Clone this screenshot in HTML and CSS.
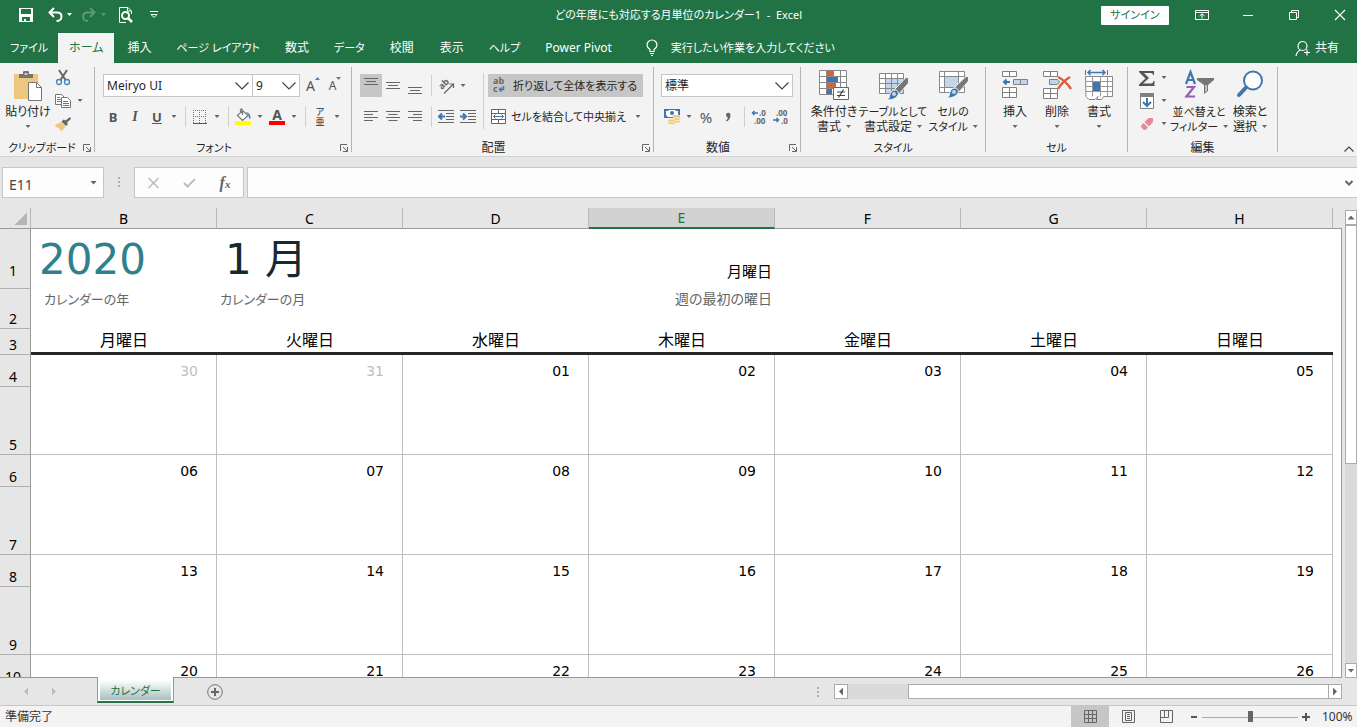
FILE: index.html
```html
<!DOCTYPE html>
<html lang="ja">
<head>
<meta charset="utf-8">
<title>どの年度にも対応する月単位のカレンダー1 - Excel</title>
<link rel="stylesheet" href="styles.css">
</head>
<body>
<header class="titlebar">
  <div class="quick">
    <button aria-label="上書き保存"><svg width="16" height="16" viewBox="0 0 16 16"><path fill="#fff" fill-rule="evenodd" d="M1 1h14v14H1zM3 2v5h10V2zM4 10v4h2v-2h2v2h4v-4z"/></svg></button>
    <button class="undo" aria-label="元に戻す"><svg width="26" height="16" viewBox="0 0 26 16"><path fill="none" stroke="#fff" stroke-width="2" d="M7 1L2.500 5.500L7 10M3 5.500h7c3 0 4.500 1.500 4.500 4s-2 4.500-5 4.500"/><path fill="#fff" d="M20 6h5l-2.500 3z"/></svg></button>
    <button class="redo" aria-label="やり直し"><svg width="26" height="16" viewBox="0 0 26 16"><path fill="none" stroke="#5c9a76" stroke-width="2" d="M9 1l4.500 4.500L9 10M13 5.500H7C4 5.500 2 7 2 9.500S4 14 7 14"/><path fill="#5c9a76" d="M20 6h5l-2.500 3z"/></svg></button>
    <button class="preview" aria-label="印刷プレビュー"><svg width="16" height="18" viewBox="0 0 16 18"><path fill="none" stroke="#fff" d="M13.500 8V5L10 1.500H1.500v15H8M9.500 1.500V5H13"/><circle cx="7.500" cy="9.500" r="3.500" fill="none" stroke="#fff" stroke-width="2"/><path stroke="#fff" stroke-width="2.500" d="M10 12l4 4"/></svg></button>
    <button class="custom" aria-label="クイック アクセス ツール バーのカスタマイズ"><svg width="8" height="8" viewBox="0 0 8 8"><path fill="none" stroke="#fff" d="M0 .5h8M1 3.500h6L4 6.500z"/></svg></button>
  </div>
  <h1 class="title kana">どの年度にも対応する月単位のカレンダー1&nbsp; -&nbsp; Excel</h1>
  <div class="window">
    <button class="signin kana">サインイン</button>
    <button aria-label="リボンの表示オプション"><svg width="14" height="12" viewBox="0 0 14 12"><path fill="none" stroke="#fff" d="M.5 1.500h13v9H.5zM.5 3.500h13M7 9.500V5M4.500 7L7 4.800L9.500 7"/></svg></button>
    <button aria-label="最小化"><svg width="10" height="10" viewBox="0 0 10 10"><path stroke="#fff" d="M0 5.500h10"/></svg></button>
    <button aria-label="元に戻す (縮小)"><svg width="10" height="10" viewBox="0 0 10 10"><path fill="none" stroke="#fff" d="M.5 2.500h7v7h-7zM2.500 2.500v-2h7v7h-2"/></svg></button>
    <button aria-label="閉じる"><svg width="10" height="10" viewBox="0 0 10 10"><path stroke="#fff" stroke-width="1.200" d="M0 0l10 10M10 0L0 10"/></svg></button>
  </div>
</header>
<nav class="tabs">
  <button class="kana file">ファイル</button><button class="on">ホーム</button><button>挿入</button><button class="kana">ページ レイアウト</button><button>数式</button><button class="kana">データ</button><button>校閲</button><button>表示</button><button class="kana">ヘルプ</button><button>Power Pivot</button>
  <button class="tell kana"><svg width="14" height="18" viewBox="0 0 14 18"><path fill="none" stroke="#fff" stroke-width="1.200" d="M5 12.500v-2C3 9 2 8 2 6a5 5 0 0 1 10 0c0 2-1 3-3 4.500v2zM5 14.500h4M6 16.500h2"/></svg>実行したい作業を入力してください</button>
  <button class="share"><svg width="16" height="17" viewBox="0 0 16 17"><circle cx="7.500" cy="6" r="4.500" fill="none" stroke="#fff" stroke-width="1.200"/><path fill="none" stroke="#fff" stroke-width="1.200" d="M1 16c.5-3 2-5 4.500-6M9 12.500h6M12 9.500v6"/></svg>共有</button>
</nav>
<section class="ribbon">
  <div class="group clip">
    <div class="body">
      <button class="big"><svg width="30" height="31" viewBox="0 0 30 31"><path fill="#ecc77e" d="M1 4h24v25H1z"/><path fill="#757575" d="M6 8V4h4V2c0-1 1-1 1-1h4s1 0 1 1v2h4v4z"/><path fill="#ecc77e" d="M11.500 3h3v2h-3z"/><path fill="#fff" stroke="#757575" d="M15.500 12.500h8l5 5v13h-13z"/><path fill="none" stroke="#757575" d="M23.500 12.500v5h5"/></svg><span>貼り付け</span><i class="caret"></i></button>
      <div class="trio">
        <div><button class="sq" aria-label="切り取り"><svg width="16" height="16" viewBox="0 0 16 16"><path stroke="#666" stroke-width="2" d="M4 0l6.500 10M12 0L5.500 10"/><circle cx="4" cy="12" r="2.500" fill="none" stroke="#4a80b5" stroke-width="1.300"/><circle cx="12" cy="12" r="2.500" fill="none" stroke="#4a80b5" stroke-width="1.300"/></svg></button></div>
        <div><button class="sq" aria-label="コピー"><svg width="16" height="16" viewBox="0 0 16 16"><path fill="#fff" stroke="#757575" d="M.5 1.500h6l3 3v7h-9z"/><path stroke="#4a80b5" d="M2 4.500h3M2 6.500h4M2 8.500h4"/><path fill="#fff" stroke="#757575" d="M6.500 4.500h6l3 3v7h-9z"/><path stroke="#4a80b5" d="M8 8.500h5M8 10.500h6M8 12.500h6"/></svg></button><button class="car" aria-label="コピーのオプション"><i class="caret"></i></button></div>
        <div><button class="sq" aria-label="書式のコピー/貼り付け"><svg width="16" height="16" viewBox="0 0 16 16"><path fill="#666" d="M15 1l1 2-4 3.500 1 1.500-2 2-4.500-4.500 2-2 2 1z"/><path fill="#ecc77e" d="M6 6l4.500 4.500L7 15l-2-1-1-2-3-1-1-2z"/></svg></button></div>
      </div>
    </div>
    <div class="foot kana"><span>クリップボード</span><button class="launch" aria-label="クリップボードのオプション"><svg width="8" height="8" viewBox="0 0 8 8"><path fill="none" stroke="#666" d="M.5 7V.5H7M3 3l4 4M7.500 3v4.500H3"/></svg></button></div>
  </div>
  <div class="group font">
    <div class="body stack">
      <div class="line">
        <div class="combo name"><select aria-label="フォント"><option>Meiryo UI</option></select><svg width="14" height="8" viewBox="0 0 14 8"><path fill="none" stroke="#444" stroke-width="1.200" d="M.5.5L7 7L13.500.5"/></svg></div>
        <div class="combo size"><select aria-label="フォント サイズ"><option>9</option></select><svg width="14" height="8" viewBox="0 0 14 8"><path fill="none" stroke="#444" stroke-width="1.200" d="M.5.5L7 7L13.500.5"/></svg></div>
        <button class="sq glyph grow" aria-label="フォント サイズの拡大">A<svg width="5" height="12" viewBox="0 0 5 12"><path fill="#4a80b5" d="M0 3h5L2.500 0z"/></svg></button>
        <button class="sq glyph small" aria-label="フォント サイズの縮小">A<svg width="5" height="12" viewBox="0 0 5 12"><path fill="#4a80b5" d="M0 0h5L2.500 3z"/></svg></button>
      </div>
      <div class="line">
        <button class="sq glyph">B</button><button class="sq glyph it">I</button><button class="sq glyph un">U</button><button class="car" aria-label="下線のオプション"><i class="caret"></i></button><i class="sep"></i>
        <button class="sq" aria-label="罫線"><svg width="14" height="14" viewBox="0 0 14 14"><path fill="none" stroke="#777" stroke-dasharray="1 1" d="M.5 0v13M6.500 0v13M12.500 0v13M0 .5h13M0 6.500h13"/><path stroke="#555" d="M0 13.500h14"/></svg></button><button class="car" aria-label="罫線のオプション"><i class="caret"></i></button><i class="sep"></i>
        <button class="sq" aria-label="塗りつぶしの色"><svg width="16" height="17" viewBox="0 0 16 17"><path fill="#fff" stroke="#777" stroke-width="1.200" d="M2.500 7.500L7.500 2.500L13 7.500L7.500 12.500zM7.500 7V2Q6.500 0 5.500 1.500V5"/><path fill="#4a80b5" d="M11 4q5 1 4.500 7q-2 0-2-4z"/><path fill="#ff0" d="M0 13h16v4H0z"/></svg></button><button class="car" aria-label="塗りつぶしのオプション"><i class="caret"></i></button>
        <button class="sq glyph color" aria-label="フォントの色">A</button><button class="car" aria-label="フォントの色のオプション"><i class="caret"></i></button><i class="sep"></i>
        <button class="sq ruby" aria-label="ふりがなの表示"><span>ア</span><span>亜</span></button><button class="car" aria-label="ふりがなのオプション"><i class="caret"></i></button>
      </div>
    </div>
    <div class="foot kana"><span>フォント</span><button class="launch" aria-label="フォントの設定"><svg width="8" height="8" viewBox="0 0 8 8"><path fill="none" stroke="#666" d="M.5 7V.5H7M3 3l4 4M7.500 3v4.500H3"/></svg></button></div>
  </div>
  <div class="group align">
    <div class="body">
      <div class="stack">
        <div class="line">
          <button class="sq on" aria-label="上揃え"><svg width="14" height="18" viewBox="0 0 14 18"><path stroke="#666" d="M0 1.500h14M2 4.500h10M0 7.500h14"/></svg></button><button class="sq" aria-label="上下中央揃え"><svg width="14" height="18" viewBox="0 0 14 18"><path stroke="#666" d="M0 5.500h14M2 8.500h10M0 11.500h14"/></svg></button><button class="sq" aria-label="下揃え"><svg width="14" height="18" viewBox="0 0 14 18"><path stroke="#666" d="M0 10.500h14M2 13.500h10M0 16.500h14"/></svg></button><i class="sep"></i>
          <button class="sq" aria-label="方向"><svg width="18" height="16" viewBox="0 0 18 16"><text transform="translate(5 12) rotate(-45)" class="abc">ab</text><path fill="none" stroke="#666" stroke-width="1.200" d="M7 15.500L16 6.500M12.500 6H16.500V10"/></svg></button><button class="car" aria-label="方向のオプション"><i class="caret"></i></button>
        </div>
        <div class="line">
          <button class="sq" aria-label="左揃え"><svg width="14" height="12" viewBox="0 0 14 12"><path stroke="#666" d="M0 .5h14M0 3.500h9M0 6.500h14M0 9.500h9"/></svg></button><button class="sq" aria-label="中央揃え"><svg width="14" height="12" viewBox="0 0 14 12"><path stroke="#666" d="M0 .5h14M2.500 3.500h9M0 6.500h14M2.500 9.500h9"/></svg></button><button class="sq" aria-label="右揃え"><svg width="14" height="12" viewBox="0 0 14 12"><path stroke="#666" d="M0 .5h14M5 3.500h9M0 6.500h14M5 9.500h9"/></svg></button><i class="sep"></i>
          <button class="sq" aria-label="インデントを減らす"><svg width="16" height="14" viewBox="0 0 16 14"><path stroke="#666" d="M0 .5h16M8 3.500h8M8 6.500h8M8 9.500h8M0 12.500h16"/><path fill="none" stroke="#3f76b0" stroke-width="2" d="M7 6.500H1.500M4 3.500l-3 3l3 3"/></svg></button><button class="sq" aria-label="インデントを増やす"><svg width="16" height="14" viewBox="0 0 16 14"><path stroke="#666" d="M0 .5h16M8 3.500h8M8 6.500h8M8 9.500h8M0 12.500h16"/><path fill="none" stroke="#3f76b0" stroke-width="2" d="M0 6.500h5.500M3 3.500l3 3l-3 3"/></svg></button>
        </div>
      </div>
      <i class="sep tall"></i>
      <div class="stack">
        <button class="wide on kana"><svg width="14" height="17" viewBox="0 0 14 17"><text x="1" y="7" class="abc">ab</text><text x="1" y="15" class="abc">c</text><path fill="none" stroke="#3f76b0" stroke-width="1.500" d="M11.500 9v3.500H7.500M9.500 10.500L7.500 12.500L9.500 14.500"/></svg><span>折り返して全体を表示する</span></button>
        <div class="line"><button class="wide kana"><svg width="15" height="15" viewBox="0 0 15 15"><path fill="#fff" stroke="#666" d="M.5.5h14v14H.5zM.5 4.500h14M.5 10.500h14M7.500.5v4M7.500 10.500v4"/><path fill="none" stroke="#3f76b0" d="M2 7.500h11M4.500 5.500l-2 2l2 2M10.500 5.500l2 2l-2 2"/></svg><span>セルを結合して中央揃え</span></button><button class="car" aria-label="結合のオプション"><i class="caret"></i></button></div>
      </div>
    </div>
    <div class="foot"><span>配置</span><button class="launch" aria-label="配置の設定"><svg width="8" height="8" viewBox="0 0 8 8"><path fill="none" stroke="#666" d="M.5 7V.5H7M3 3l4 4M7.500 3v4.500H3"/></svg></button></div>
  </div>
  <div class="group number">
    <div class="body stack">
      <div class="line"><div class="combo fmt"><select aria-label="表示形式"><option>標準</option></select><svg width="14" height="8" viewBox="0 0 14 8"><path fill="none" stroke="#444" stroke-width="1.200" d="M.5.5L7 7L13.500.5"/></svg></div></div>
      <div class="line">
        <button class="sq" aria-label="通貨表示形式"><svg width="17" height="17" viewBox="0 0 17 17"><path fill="#3f76b0" d="M0 1h16v9H0z"/><path fill="#fff" d="M2 3h2l1-1h6l1 1h2v4H9v2H4L2 7z"/><circle cx="8" cy="5" r="2" fill="#3f76b0"/><g fill="#ecc77e" stroke="#fff" stroke-width=".6"><ellipse cx="12.500" cy="13.500" rx="4" ry="1.500"/><ellipse cx="12.500" cy="11" rx="4" ry="1.500"/><ellipse cx="12.500" cy="8.500" rx="4" ry="1.500"/><ellipse cx="7.500" cy="15" rx="4" ry="1.500"/><ellipse cx="7.500" cy="12.500" rx="4" ry="1.500"/></g></svg></button><button class="car" aria-label="通貨のオプション"><i class="caret"></i></button><button class="sq pct">%</button><button class="sq" aria-label="桁区切りスタイル"><svg width="6" height="10" viewBox="0 0 6 10"><path fill="#666" d="M1 3a2.200 2.200 0 1 1 4.500 0C5.500 6 4 8.500 1.500 9.500L1 8.500c1.300-1 1.800-2 1.800-3.200C1.700 5.200 1 4.200 1 3z"/></svg></button><i class="sep"></i>
        <button class="sq" aria-label="小数点以下の表示桁数を増やす"><svg width="16" height="15" viewBox="0 0 16 15"><text x="8" y="7" class="dec">.0</text><text x="3" y="15" class="dec">.00</text><path fill="none" stroke="#3f76b0" stroke-width="1.500" d="M7 4H1.500M3.500 2l-2 2l2 2"/></svg></button><button class="sq" aria-label="小数点以下の表示桁数を減らす"><svg width="16" height="15" viewBox="0 0 16 15"><text x="3" y="7" class="dec">.00</text><text x="8" y="15" class="dec">.0</text><path fill="none" stroke="#3f76b0" stroke-width="1.500" d="M0 11h5.500M3.500 9l2 2l-2 2"/></svg></button>
      </div>
    </div>
    <div class="foot"><span>数値</span><button class="launch" aria-label="表示形式の設定"><svg width="8" height="8" viewBox="0 0 8 8"><path fill="none" stroke="#666" d="M.5 7V.5H7M3 3l4 4M7.500 3v4.500H3"/></svg></button></div>
  </div>
  <div class="group styles">
    <div class="body">
      <button class="big"><svg width="30" height="31" viewBox="0 0 30 31"><path fill="#fff" stroke="#888" d="M.5.500h27v24H.5zM.5 6.500h27M.5 12.500h27M.5 18.500h27M7.500.5v24M14.500.5v24M21.500.5v24"/><path fill="#d9603b" d="M8 1h6v5H8zM8 13h9v5H8z"/><path fill="#3f76b0" d="M8 7h11v5H8zM8 19h5v5H8z"/><path fill="#fff" stroke="#666" d="M14.500 17.500h15v12h-15z"/><path stroke="#444" stroke-width="1.200" d="M18 22h8M18 25.500h8M24.500 19.500l-5 8"/></svg><span>条件付き</span><span>書式<i class="caret"></i></span></button>
      <button class="big mid"><svg width="30" height="31" viewBox="0 0 30 31"><path fill="#fff" d="M1 3h25v21H1z"/><path fill="#c3d5ea" d="M8 9h18v15H8z"/><path fill="none" stroke="#888" d="M1.500 3.500h24v20h-24zM1.500 8.500h24M1.500 13.500h24M1.500 18.500h24M7.500 3.500v20M13.500 3.500v20M19.500 3.500v20"/><path fill="#777" stroke="#f3f3f3" d="M28 7.500h2.500V13L21 24l-4.500-4.500z"/><path fill="#3f76b0" stroke="#f3f3f3" d="M17 20c3 0 4 3 3 5c-2 4-7 5-12 5c4-1 3-3 4-6c1-3 3-4 5-4z"/><circle cx="16" cy="24" r="2" fill="#c3d5ea"/></svg><span class="kana">テーブルとして</span><span>書式設定<i class="caret"></i></span></button>
      <button class="big cell"><svg width="30" height="31" viewBox="0 0 30 31"><path fill="#fff" stroke="#888" d="M1.500 1.500h25v21h-25zM1.500 6.500h25M1.500 17.500h25M6.500 1.500v21M20.500 1.500v21"/><path fill="#c3d5ea" d="M7 7h13v10H7z"/><path fill="#777" stroke="#f3f3f3" d="M28 6.500h2.500V11L21 22l-4.500-4.500z"/><path fill="#3f76b0" stroke="#f3f3f3" d="M17 18c3 0 4 3 3 5c-2 4-7 5-12 5c4-1 3-3 4-6c1-3 3-4 5-4z"/><circle cx="16" cy="22" r="2" fill="#c3d5ea"/></svg><span class="kana">セルの</span><span class="kana">スタイル<i class="caret"></i></span></button>
    </div>
    <div class="foot kana"><span>スタイル</span></div>
  </div>
  <div class="group cells">
    <div class="body">
      <button class="big"><svg width="28" height="31" viewBox="0 0 28 31"><g fill="#fff" stroke="#808080"><path d="M1.500 1.500h14v5h-14zM8.500 1.500v5M1.500 17.500h14v10h-14zM8.500 17.500v10M1.500 22.500h14"/><path fill="#c3d5ea" d="M12.500 9.500h14v5h-14zM19.500 9.500v5"/></g><path fill="none" stroke="#3f76b0" stroke-width="2" d="M9 12H3M5.500 9.500L3 12l2.500 2.500"/></svg><span>挿入</span><i class="caret"></i></button>
      <button class="big"><svg width="30" height="31" viewBox="0 0 30 31"><g fill="#fff" stroke="#808080"><path d="M1.500 1.500h14v5h-14zM8.500 1.500v5M1.500 18.500h14v10h-14zM8.500 18.500v10M1.500 23.500h14"/><path fill="#c3d5ea" d="M7.500 9.500h8l2 2.500-2 2.500h-8z"/></g><path fill="none" stroke="#d9603b" stroke-width="2.400" d="M16 7q8 4 13 12M28 7q-8 5-12 12"/></svg><span>削除</span><i class="caret"></i></button>
      <button class="big"><svg width="28" height="31" viewBox="0 0 28 31"><path fill="none" stroke="#3f76b0" d="M.5 0v5M22.500 0v5"/><path fill="none" stroke="#3f76b0" stroke-width="1.500" d="M3 2.500h17M5.500 0L3 2.500L5.500 5M17.500 0L20 2.500L17.500 5"/><path fill="#fff" stroke="#888" d="M.5 6.500h27v20h-9l-2 3h-5l1.500-3l-3 3h-6l-3-3z"/><path fill="none" stroke="#999" d="M.5 11.500h27M.5 21.500h27M7.500 6.500v20M15.500 6.500v20M22.500 6.500v20M.5 16.500h27"/><path fill="#3f76b0" d="M8 12h7v9H8z"/></svg><span>書式</span><i class="caret"></i></button>
    </div>
    <div class="foot kana"><span>セル</span></div>
  </div>
  <div class="group edit">
    <div class="body">
      <div class="trio">
        <div><button class="sq" aria-label="オート SUM"><svg width="16" height="16" viewBox="0 0 16 16"><path fill="#555" d="M0 1h15v4h-1q0-2-2-2H5l5 5l-6 5.500h8q2 0 2.500-2.500h1v5H0v-1.500L6.500 8.500L0 2z"/></svg></button><button class="car" aria-label="合計のオプション"><i class="caret"></i></button></div>
        <div><button class="sq" aria-label="フィル"><svg width="14" height="16" viewBox="0 0 14 16"><path fill="#fff" stroke="#808080" d="M.5.500h13v15H.5z"/><path fill="#808080" d="M0 0h14v4H0z"/><path fill="none" stroke="#3f76b0" stroke-width="2" d="M7 5v8M3 9l4 4l4-4"/></svg></button><button class="car" aria-label="フィルのオプション"><i class="caret"></i></button></div>
        <div><button class="sq" aria-label="クリア"><svg width="14" height="14" viewBox="0 0 14 14"><path fill="#e8899a" d="M8.500 1H13v4L9 9.500L4.500 5zM3.500 6L8 10.500L5.500 13H4L1 10V8.500z"/></svg></button><button class="car" aria-label="クリアのオプション"><i class="caret"></i></button></div>
      </div>
      <button class="big sort"><svg width="30" height="31" viewBox="0 0 30 31"><path fill="none" stroke="#3f76b0" stroke-width="2.200" d="M2 14L6.500 2L11 14M3.500 10h6"/><path fill="none" stroke="#9a5cb4" stroke-width="2.200" d="M2.500 17H10L2.500 26.500H11"/><path fill="#777" d="M13 8h17v2l-6 5v6l-4 3v-9l-7-5z"/><path fill="#f3f3f3" d="M21.500 15h1.200v6l-1.200 1z"/></svg><span class="kana">並べ替えと</span><span class="kana">フィルター<i class="caret"></i></span></button>
      <button class="big"><svg width="30" height="31" viewBox="0 0 30 31"><circle cx="18" cy="10.500" r="9" fill="#fff" stroke="#3f76b0" stroke-width="2"/><path stroke="#3f76b0" stroke-width="4" stroke-linecap="round" d="M11 17.500L4 25"/></svg><span>検索と</span><span>選択<i class="caret"></i></span></button>
    </div>
    <div class="foot"><span>編集</span></div>
  </div>
  <button class="collapse" aria-label="リボンを折りたたむ"><svg width="10" height="6" viewBox="0 0 10 6"><path fill="none" stroke="#444" stroke-width="1.200" d="M.5 5.500L5 1l4.500 4.500"/></svg></button>
</section>
<section class="formula">
  <div class="namebox"><input aria-label="名前ボックス" value="E11"><i class="caret wide-caret"></i></div>
  <i class="dots"></i>
  <div class="fx">
    <button aria-label="キャンセル"><svg width="11" height="10" viewBox="0 0 11 10"><path stroke="#bdbdbd" stroke-width="1.600" d="M.5 0l10 10M10.500 0L.5 10"/></svg></button>
    <button aria-label="入力"><svg width="13" height="10" viewBox="0 0 13 10"><path fill="none" stroke="#bdbdbd" stroke-width="2" d="M1 5l3.500 3.500L12 1"/></svg></button>
    <button class="fn" aria-label="関数の挿入"><span>f</span><small>x</small></button>
  </div>
  <div class="entry"><input aria-label="数式バー"><svg width="8" height="6" viewBox="0 0 8 6"><path fill="none" stroke="#666" stroke-width="2" d="M.5 1L4 4.500L7.500 1"/></svg></div>
</section>
<main class="sheet">
  <div class="grid">
    <table>
      <colgroup><col class="c-row"><col><col><col><col><col><col><col><col class="c-end"></colgroup>
      <thead><tr><th class="corner"></th><th>B</th><th>C</th><th>D</th><th class="cur">E</th><th>F</th><th>G</th><th>H</th><th class="end"></th></tr></thead>
      <tbody>
        <tr class="r1"><th>1</th><td class="year">2020</td><td class="month">1 月</td><td></td><td class="first">月曜日</td><td></td><td></td><td></td><td></td></tr>
        <tr class="r2"><th>2</th><td class="in">カレンダーの年</td><td>カレンダーの月</td><td></td><td class="right">週の最初の曜日</td><td></td><td></td><td></td><td></td></tr>
        <tr class="days"><th>3</th><td>月曜日</td><td>火曜日</td><td>水曜日</td><td>木曜日</td><td>金曜日</td><td>土曜日</td><td>日曜日</td><td class="end"></td></tr>
        <tr class="num"><th>4</th><td class="off">30</td><td class="off">31</td><td>01</td><td>02</td><td>03</td><td>04</td><td>05</td><td></td></tr>
        <tr class="gap"><th>5</th><td></td><td></td><td></td><td></td><td></td><td></td><td></td><td></td></tr>
        <tr class="num"><th>6</th><td>06</td><td>07</td><td>08</td><td>09</td><td>10</td><td>11</td><td>12</td><td></td></tr>
        <tr class="gap"><th>7</th><td></td><td></td><td></td><td></td><td></td><td></td><td></td><td></td></tr>
        <tr class="num"><th>8</th><td>13</td><td>14</td><td>15</td><td>16</td><td>17</td><td>18</td><td>19</td><td></td></tr>
        <tr class="gap"><th>9</th><td></td><td></td><td></td><td></td><td></td><td></td><td></td><td></td></tr>
        <tr class="num"><th>10</th><td>20</td><td>21</td><td>22</td><td>23</td><td>24</td><td>25</td><td>26</td><td></td></tr>
      </tbody>
    </table>
  </div>
  <div class="vscroll"><button aria-label="上へスクロール"><i class="tri up"></i></button><div class="thumb"></div><button class="last" aria-label="下へスクロール"><i class="tri down"></i></button></div>
</main>
<section class="sheetbar">
  <button class="nav" aria-label="前のシート"><i class="tri left pale"></i></button><button class="nav" aria-label="次のシート"><i class="tri right pale"></i></button>
  <button class="sheettab kana"><span>カレンダー</span></button>
  <button class="add" aria-label="新しいシート"><svg width="16" height="16" viewBox="0 0 16 16"><circle cx="8" cy="8" r="7.300" fill="none" stroke="#777"/><path stroke="#666" stroke-width="2" d="M4 8h8M8 4v8"/></svg></button>
  <i class="dots"></i>
  <div class="hscroll"><button aria-label="左へスクロール"><i class="tri left"></i></button><div class="thumb"></div><button aria-label="右へスクロール"><i class="tri right"></i></button></div>
</section>
<footer class="status">
  <span class="ready">準備完了</span>
  <button class="view on" aria-label="標準"><svg width="13" height="13" viewBox="0 0 13 13"><path fill="none" stroke="#666" d="M.5.5h12v12H.5zM4.500.5v12M8.500.5v12M.5 4.500h12M.5 8.500h12"/></svg></button>
  <button class="view" aria-label="ページ レイアウト表示"><svg width="13" height="13" viewBox="0 0 13 13"><path fill="none" stroke="#666" d="M.5.5h12v12H.5zM3.500 2.500h6v8h-6zM5 4.500h3M5 6.500h3M5 8.500h3"/></svg></button>
  <button class="view" aria-label="改ページ プレビュー"><svg width="13" height="13" viewBox="0 0 13 13"><path fill="none" stroke="#666" d="M.5.5h12v12H.5zM.5 7.500h8v-7M4.500.5v7"/></svg></button>
  <button class="zoom minus" aria-label="縮小"><svg width="6" height="8" viewBox="0 0 6 8"><path stroke="#555" stroke-width="2" d="M0 4h6"/></svg></button>
  <input class="slider" type="range" min="0" max="100" value="50" aria-label="ズーム">
  <button class="zoom" aria-label="拡大"><svg width="8" height="8" viewBox="0 0 8 8"><path stroke="#555" stroke-width="2" d="M0 4h8M4 0v8"/></svg></button>
  <span class="level">100%</span>
</footer>
</body>
</html>
```
FILE: styles.css
```css
* { box-sizing: border-box; }
html, body { height: 100%; }
body {
  margin: 0;
  display: flex;
  flex-direction: column;
  overflow: hidden;
  background: #e6e6e6;
  color: #262626;
  font: 12px/16px "Noto Sans", "Noto Sans CJK JP", sans-serif;
  font-feature-settings: "palt";
}
button, input, select { font: inherit; font-feature-settings: inherit; color: inherit; margin: 0; }
button { border: 0; padding: 0; background: none; display: flex; align-items: center; justify-content: center; white-space: nowrap; flex: none; }
svg { display: block; flex: none; overflow: visible; }
i { display: block; flex: none; }
.kana { font-size: 11px; }

/* title bar and ribbon tabs */
.titlebar { display: grid; grid-template-columns: 1fr auto 1fr; height: 33px; flex: none; background: #217346; color: #fff; padding-bottom: 3px; }
.quick { display: flex; align-items: center; padding-left: 18px; gap: 8px; }
.quick .undo { margin-left: 5px; }
.quick .preview { margin-left: 3px; }
.quick .custom { margin-left: 8px; }
.title { margin: 0; font-weight: 400; align-self: center; }
.window { display: flex; align-items: center; justify-content: flex-end; }
.window button { width: 46px; height: 30px; }
.window button:last-child { width: 40px; padding-left: 6px; }
.window .signin { width: 68px; height: 19px; background: #fff; color: #217346; border-radius: 1px; margin-right: 10px; }
.tabs { display: flex; height: 30px; flex: none; background: #217346; color: #fff; }
.tabs button { padding: 0 13px; }
.tabs .kana { padding: 0 12px; }
.tabs .file { padding: 0 10px; }
.tabs .on { background: #f3f3f3; color: #217346; padding: 0 11px; }
.tabs .tell { gap: 12px; padding-left: 20px; }
.tabs .share { margin-left: auto; gap: 4px; padding-right: 18px; }

/* ribbon */
.ribbon { display: flex; height: 94px; flex: none; background: #f3f3f3; border-bottom: 1px solid #d2d2d2; padding: 4px 0; }
.group { display: flex; flex-direction: column; border-right: 1px solid #b5b5b5; flex: none; }
.body { display: flex; flex: 1; align-items: flex-start; padding-top: 3px; }
.foot { display: flex; height: 12px; align-items: center; justify-content: center; position: relative; margin-bottom: -2px; }
.launch { position: absolute; right: 3px; bottom: 2px; }
.clip { width: 95px; }
.clip .foot { justify-content: flex-start; padding-left: 8px; }
.font { width: 257px; }
.align { width: 302px; }
.number { width: 147px; }
.styles { width: 185px; }
.cells { width: 142px; }
.edit { width: 150px; }
.font .foot, .align .foot, .number .foot { padding-right: 18px; }
.font .body, .number .body { padding-left: 7px; }
.align .body { padding-left: 8px; }
.styles .body { padding-left: 9px; }
.cells .body, .edit .body { padding-left: 8px; }
.clip .body { padding-left: 4px; }
.stack, .trio { display: flex; flex-direction: column; }
.body.stack, .body > .stack { padding-top: 7px; gap: 8px; align-items: flex-start; }
.body > .stack { padding-top: 4px; }
.line { display: flex; height: 23px; align-items: center; }
.trio > div { display: flex; height: 23px; align-items: center; }
.trio { margin-top: -4px; }
.sq { width: 22px; height: 23px; }
.car { width: 12px; height: 23px; }
.on { background: #c6c6c6; }
.caret { width: 5px; height: 3px; background: #666; clip-path: polygon(0 0, 100% 0, 50% 100%); }
.sep { width: 1px; height: 21px; background: #d0d0d0; margin: 0 3px 0 5px; }
.sep.tall { height: 56px; margin: 3px 4px 0; }
.big { flex-direction: column; justify-content: flex-start; width: 48px; line-height: 15px; }
.big svg { margin-bottom: 3px; }
.big > .caret { margin-top: 6px; }
.big span { display: flex; align-items: center; justify-content: center; gap: 5px; height: 15px; }
.styles .mid { width: 70px; }
.styles .cell { width: 50px; }
.cells .big { width: 42px; }
.edit .sort { width: 58px; }
.edit .big:last-child { width: 44px; }
.wide { height: 23px; gap: 7px; padding-left: 4px; justify-content: flex-start; }
.wide.on { width: 155px; }
.line .wide { gap: 5px; padding-left: 3px; width: 144px; }
.combo { display: grid; height: 23px; align-items: center; background: #fff; border: 1px solid #c6c6c6; }
.combo select { grid-area: 1 / 1; appearance: none; border: 0; background: none; padding: 0 3px; height: 21px; }
.combo svg { grid-area: 1 / 1; justify-self: end; margin-right: 3px; pointer-events: none; }
.name { width: 150px; margin-left: 1px; }
.size { width: 48px; margin-left: -1px; margin-right: 2px; }
.fmt { width: 132px; }
.glyph { font-weight: 700; font-size: 13px; color: #555; }
.glyph svg { align-self: flex-start; margin-top: 3px; }
.grow { font-size: 14px; font-weight: 400; }
.glyph.small { font-size: 12px; font-weight: 400; }
.it { font-style: italic; font-family: "Liberation Serif", serif; font-size: 14px; }
.un { text-decoration: underline; }
.color { width: 16px; margin: 0 3px; height: 17px; border-bottom: 4px solid #f00; font-size: 14px; line-height: 12px; }
.ruby { flex-direction: column; font-size: 9px; line-height: 10px; }
.pct { font-size: 15px; color: #555; }
.abc { font: 700 9px "Noto Sans", sans-serif; fill: #666; }
.dec { font: 700 8px "Noto Sans", sans-serif; fill: #666; }
.collapse { margin-left: auto; align-self: flex-end; margin-right: 3px; }

/* formula bar */
.formula { display: flex; height: 51px; flex: none; align-items: flex-start; padding-top: 10px; }
.namebox, .fx, .entry { display: flex; align-items: center; height: 31px; background: #fdfdfd; border: 1px solid #c6c6c6; }
.namebox { width: 102px; margin-left: 2px; padding-right: 6px; }
.namebox input { flex: 1; min-width: 0; border: 0; background: none; padding: 4px 6px 0; font-size: 14px; color: #444; }
.wide-caret { width: 7px; height: 4px; }
.dots { width: 2px; height: 10px; background: repeating-linear-gradient(#b0b0b0 0 2px, transparent 2px 4px); align-self: center; }
.formula .dots { margin: 10px 14px 0; align-self: flex-start; }
.fx { width: 110px; }
.fx button { flex: 1; height: 29px; }
.fn { font-family: "Liberation Serif", serif; font-style: italic; font-weight: 700; font-size: 16px; color: #666; }
.fn small { font-size: 11px; padding-top: 3px; }
.entry { flex: 1; margin-left: 3px; border-right: 0; padding-right: 4px; }
.entry input { flex: 1; min-width: 0; border: 0; background: none; }

/* worksheet */
.sheet { display: flex; flex: 1; min-height: 0; }
.grid { flex: 1; min-width: 0; overflow: hidden; border-bottom: 1px solid #999; margin-right: 3px; }
table { width: 100%; table-layout: fixed; border-collapse: separate; border-spacing: 0; background: #fff; color: #000; }
.c-row { width: 31px; }
.c-end { width: 9px; }
th { font-weight: 400; padding: 0; background: #e6e6e6; font-size: 14px; }
td { padding: 0; white-space: nowrap; }
thead th { height: 21px; border-bottom: 1px solid #999; border-right: 1px solid #b8b8b8; line-height: 19px; }
thead .corner { background: linear-gradient(135deg, transparent 50%, #b5b5b5 50%) 14px 4px / 13px 13px no-repeat #e6e6e6; }
thead .end { border-right: 0; }
thead .cur { background: #d2d2d2; color: #217346; border-bottom: 2px solid #217346; }
tbody th { border-right: 1px solid #999; border-bottom: 1px solid #b0b0b0; vertical-align: bottom; padding-right: 4px; line-height: 19px; }
tbody td:last-child { border-right: 1px solid #999; }
.r1 { height: 60px; }
.r1 th { padding-bottom: 8px; }
.r2 { height: 40px; }
.days { height: 26px; }
.num { height: 32px; }
.gap { height: 68px; }
.year, .month { font-family: "DejaVu Sans", "Noto Sans CJK JP", sans-serif; font-size: 42px; line-height: 58px; padding: 2px 0 0 8px; vertical-align: top; color: #31808c; }
.month { color: #142a30; }
.first { font-size: 15px; vertical-align: bottom; text-align: right; padding: 0 3px 10px 0; }
.r2 td { font-size: 13px; color: #666; vertical-align: top; line-height: 20px; padding-left: 3px; }
.r2 .in { padding-left: 13px; }
.r2 .right { font-size: 14px; text-align: right; padding-right: 3px; }
.days td { text-align: center; font-size: 16px; line-height: 23px; border-bottom: 3px solid #262626; }
.days .end { border-bottom: 0; }
.num td, .gap td { border-right: 1px solid #bfbfbf; }
.num td { font: 14px/20px "DejaVu Sans", sans-serif; text-align: right; vertical-align: top; padding: 6px 18px 0 0; }
.num .off { color: #bfbfbf; }
.gap td:not(:last-child) { border-bottom: 1px solid #bfbfbf; }
.vscroll { width: 12px; margin-top: 2px; display: flex; flex-direction: column; background: #dadada; }
.vscroll button { height: 15px; width: 12px; border: 1px solid #ababab; background: #fff; }
.vscroll .thumb { height: 51%; border: 1px solid #ababab; background: #fff; }
.vscroll .last { margin-top: auto; }
.tri { width: 7px; height: 4px; background: #666; }
.up { clip-path: polygon(50% 0, 100% 100%, 0 100%); }
.down { clip-path: polygon(0 0, 100% 0, 50% 100%); }
.left, .right.tri { width: 4px; height: 8px; }
.left { clip-path: polygon(100% 0, 100% 100%, 0 50%); }
.right.tri { clip-path: polygon(0 0, 100% 50%, 0 100%); }
.pale { background: #bdbdbd; }

/* sheet tabs and scroll bar */
.sheetbar { display: flex; height: 27px; flex: none; align-items: center; padding-right: 15px; }
.nav { width: 28px; height: 26px; }
.nav:first-child { margin-left: 12px; }
.sheettab { align-self: flex-start; width: 77px; height: 26px; margin: -1px 33px 0 29px; padding: 3px 2px 1px; background: #fff; border: solid #999; border-width: 0 1px; border-bottom: 2px solid #217346; color: #217346; position: relative; }
.sheettab span { flex: 1; height: 20px; line-height: 22px; background: linear-gradient(#fff, #a9bfc0); }
.sheetbar .dots { margin-left: auto; margin-right: 15px; }
.hscroll { display: flex; width: 38%; max-width: 508px; height: 15px; background: #dadada; }
.hscroll button { width: 14px; border: 1px solid #ababab; background: #fff; }
.hscroll .thumb { flex: 1; margin-left: 60px; border: 1px solid #ababab; background: #fff; margin-right: -1px; }

/* status bar */
.status { display: flex; height: 22px; flex: none; align-items: center; background: #f3f3f3; border-top: 1px solid #c6c6c6; color: #333; }
.ready { margin: 0 auto 0 5px; }
.view { width: 38px; height: 21px; }
.zoom { width: 14px; height: 20px; margin: 0 1px; }
.minus { margin-left: 2px; }
.slider { appearance: none; width: 96px; height: 12px; background: linear-gradient(#ababab, #ababab) 0 6px / 100% 1px no-repeat; }
.slider::-webkit-slider-thumb { appearance: none; width: 5px; height: 11px; background: #666; }
.level { width: 43px; padding-left: 8px; }
```
